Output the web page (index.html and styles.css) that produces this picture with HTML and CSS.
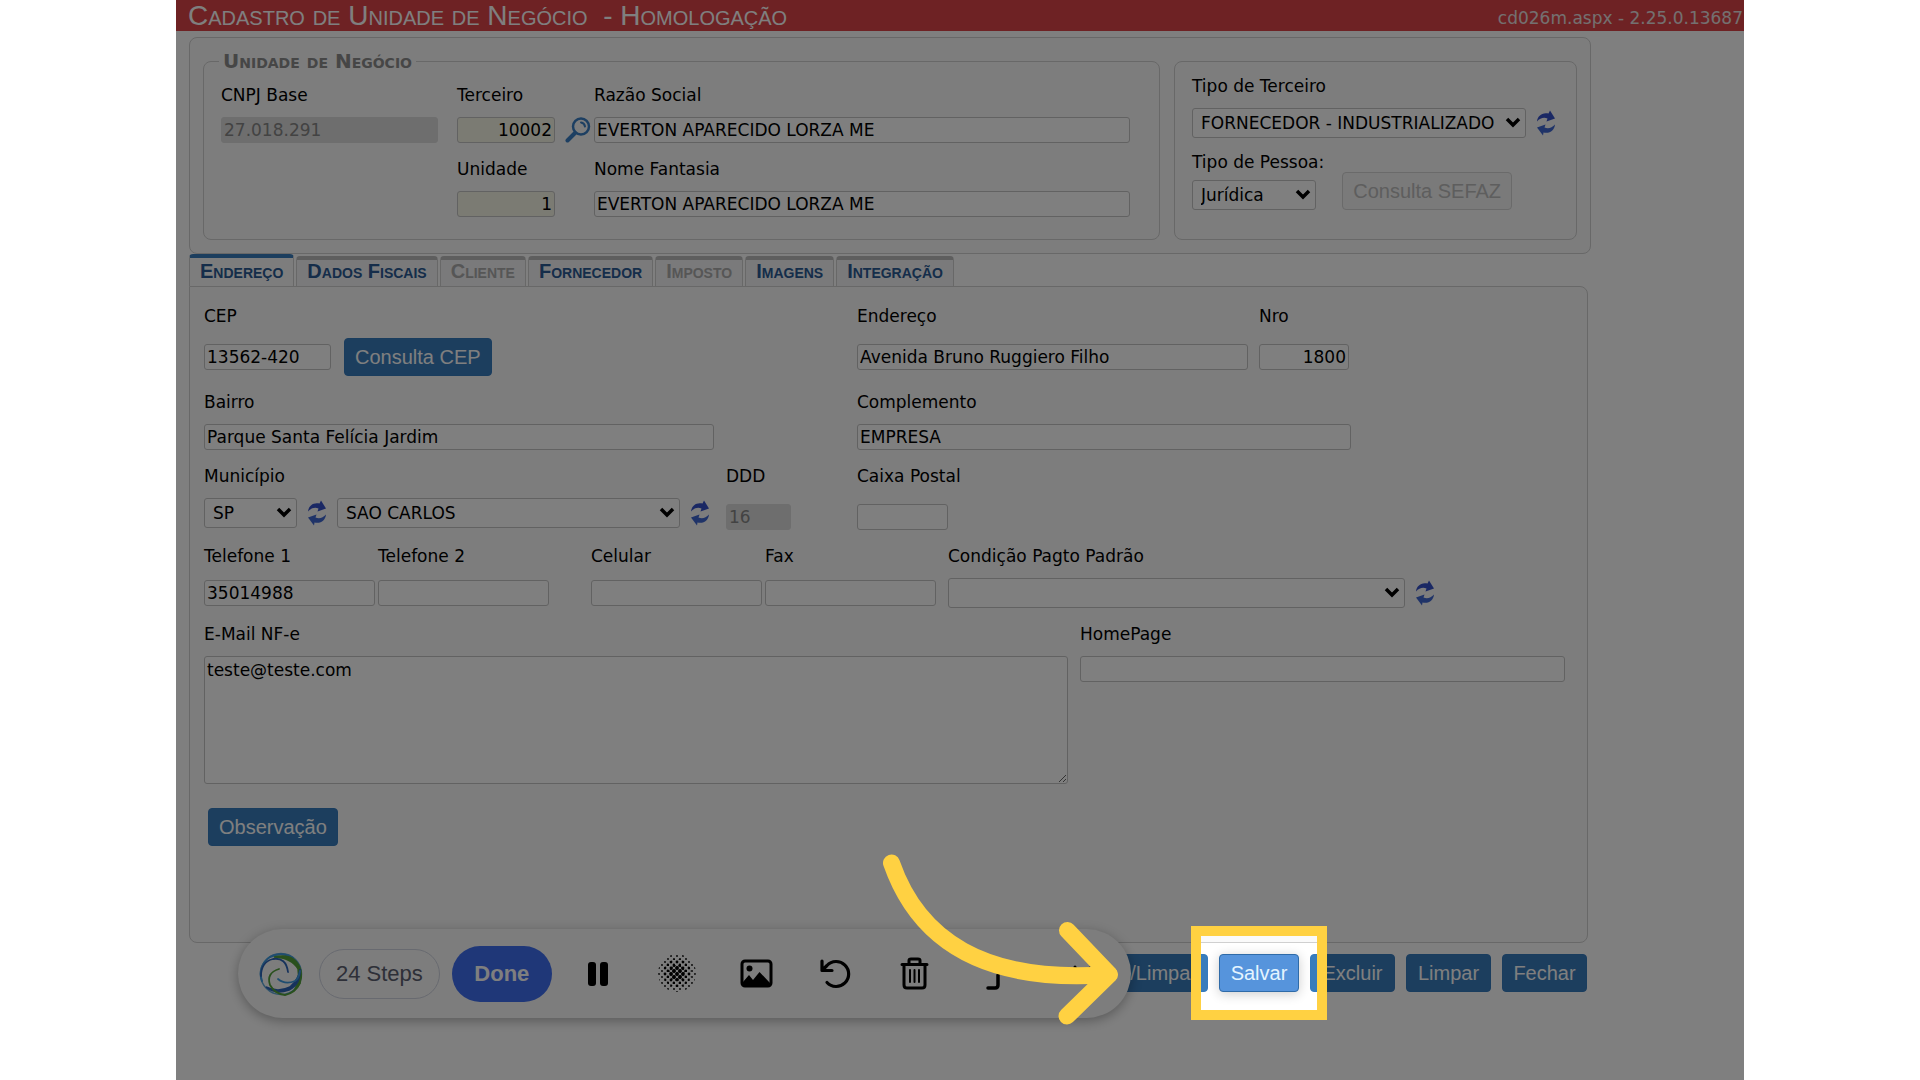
FILE: index.html
```html
<!DOCTYPE html>
<html lang="pt-BR">
<head>
<meta charset="utf-8">
<title>Cadastro de Unidade de Negócio</title>
<link rel="stylesheet" href="styles.css">
</head>
<body>
<svg class="defs" width="0" height="0" aria-hidden="true">
  <symbol id="refresh" viewBox="0 0 20 26">
    <path d="M1 11.500C1.500 6 6 2 12.500 3.500L14 0.500L19 8.500L10.500 11.500L11.500 8.500C8 7 4 8 1 11.500Z" fill="#3450c8"/>
    <path d="M19 14.500C18.500 20 14 24 7.500 22.500L7 25.500L1 17.500L9.500 14.500L8.500 17.500C12 19 16 18 19 14.500Z" fill="#3f66d0"/>
  </symbol>
</svg>
<main class="stage">
  <header class="titlebar">
    <h1 class="title">Cadastro de Unidade de Negócio &nbsp;- Homologação</h1>
    <span class="version">cd026m.aspx - 2.25.0.13687</span>
  </header>

  <section class="summary">
    <fieldset class="unit">
      <legend>Unidade de Negócio</legend>
      <div class="unit-grid">
        <div class="field cnpj"><label for="cnpj">CNPJ Base</label><input id="cnpj" class="off" value="27.018.291" disabled></div>
        <div class="field code"><label for="terceiro">Terceiro</label><input id="terceiro" class="num key" value="10002"></div>
        <button class="icon-btn lens" aria-label="Pesquisar">
          <svg width="26" height="26" viewBox="0 0 26 26" fill="none" stroke="#3a7fc4" stroke-linecap="round"><circle cx="16" cy="9.500" r="8" stroke-width="2.500"/><path d="M10 16L2.500 23.500" stroke-width="4"/><path d="M16 5.500Q19.500 6 20 9.500" stroke-width="2"/></svg>
        </button>
        <div class="field"><label for="razao">Razão Social</label><input id="razao" value="EVERTON APARECIDO LORZA ME"></div>
        <div class="field code col-2"><label for="unidade">Unidade</label><input id="unidade" class="num key" value="1"></div>
        <div class="field col-4"><label for="fantasia">Nome Fantasia</label><input id="fantasia" value="EVERTON APARECIDO LORZA ME"></div>
      </div>
    </fieldset>
    <div class="kind">
      <div class="field">
        <label for="tipo">Tipo de Terceiro</label>
        <div class="controls">
          <select id="tipo" class="grow"><option>FORNECEDOR - INDUSTRIALIZADO</option></select>
          <button class="icon-btn" aria-label="Atualizar tipo"><svg width="20" height="26"><use href="#refresh"/></svg></button>
        </div>
      </div>
      <div class="person">
        <div class="field tight"><label for="pessoa">Tipo de Pessoa:</label><select id="pessoa"><option>Jurídica</option></select></div>
        <button class="btn btn-off" disabled>Consulta SEFAZ</button>
      </div>
    </div>
  </section>

  <nav class="tabs">
    <a href="#endereco" class="tab active">Endereço</a>
    <a href="#fiscais" class="tab">Dados Fiscais</a>
    <a href="#cliente" class="tab muted">Cliente</a>
    <a href="#fornecedor" class="tab">Fornecedor</a>
    <a href="#imposto" class="tab muted">Imposto</a>
    <a href="#imagens" class="tab">Imagens</a>
    <a href="#integracao" class="tab">Integração</a>
  </nav>

  <section class="panel" id="endereco">
    <div class="row row-address">
      <div class="field">
        <label for="cep">CEP</label>
        <div class="controls tall"><input id="cep" class="w-cep" value="13562-420"><button class="btn">Consulta CEP</button></div>
      </div>
      <div class="field"><label for="rua">Endereço</label><div class="controls tall"><input id="rua" value="Avenida Bruno Ruggiero Filho"></div></div>
      <div class="field"><label for="nro">Nro</label><div class="controls tall"><input id="nro" class="num" value="1800"></div></div>
    </div>
    <div class="row row-district">
      <div class="field"><label for="bairro">Bairro</label><input id="bairro" value="Parque Santa Felícia Jardim"></div>
      <div class="field"><label for="compl">Complemento</label><input id="compl" value="EMPRESA"></div>
    </div>
    <div class="row row-city">
      <div class="field">
        <label for="uf">Município</label>
        <div class="controls city">
          <select id="uf" class="w-uf"><option>SP</option></select>
          <button class="icon-btn" aria-label="Atualizar UF"><svg width="20" height="26"><use href="#refresh"/></svg></button>
          <select class="grow" aria-label="Cidade"><option>SAO CARLOS</option></select>
          <button class="icon-btn" aria-label="Atualizar cidade"><svg width="20" height="26"><use href="#refresh"/></svg></button>
        </div>
      </div>
      <div class="field low"><label for="ddd">DDD</label><input id="ddd" class="off" value="16" disabled></div>
      <div class="field low"><label for="caixa">Caixa Postal</label><input id="caixa"></div>
    </div>
    <div class="row row-phone">
      <div class="field"><label for="tel1">Telefone 1</label><div class="controls"><input id="tel1" value="35014988"></div></div>
      <div class="field"><label for="tel2">Telefone 2</label><div class="controls"><input id="tel2"></div></div>
      <div class="field"><label for="cel">Celular</label><div class="controls"><input id="cel"></div></div>
      <div class="field"><label for="fax">Fax</label><div class="controls"><input id="fax"></div></div>
      <div class="field">
        <label for="cond">Condição Pagto Padrão</label>
        <div class="controls">
          <select id="cond" class="grow"><option></option></select>
          <button class="icon-btn" aria-label="Atualizar condição"><svg width="20" height="26"><use href="#refresh"/></svg></button>
        </div>
      </div>
    </div>
    <div class="row row-mail">
      <div class="field"><label for="mail">E-Mail NF-e</label><textarea id="mail">teste@teste.com</textarea></div>
      <div class="field"><label for="home">HomePage</label><input id="home"></div>
    </div>
    <div class="note"><button class="btn">Observação</button></div>
  </section>

  <footer class="actions">
    <button class="btn btn-under">/Limpar</button>
    <div class="target">
      <button class="btn btn-hot">Salvar</button>
      <div class="spotlight"></div>
      <svg class="pointer" width="245" height="180" viewBox="880 850 245 180" fill="none" stroke="#ffd142" stroke-width="17" stroke-linecap="round" stroke-linejoin="round" aria-hidden="true">
        <path d="M893.500 864C920 940 985 985 1111 975.500"/><path d="M1069.500 931.500L1111.500 975.500L1069 1017"/>
      </svg>
    </div>
    <button class="btn">Excluir</button>
    <button class="btn">Limpar</button>
    <button class="btn">Fechar</button>
  </footer>

  <div class="recorder">
    <svg width="46" height="46" viewBox="0 0 46 46" fill="none" stroke-linecap="round" aria-hidden="true">
      <circle cx="23" cy="23" r="20.500" stroke="#5fa8d8" stroke-width="1.500"/>
      <path d="M4 30A20 20 0 0 1 12 6Q24 0 35 7" stroke="#3f9be0" stroke-width="2"/>
      <path d="M16 6Q38 1 43 20Q45 32 36 40Q42 30 40 18Q34 7 16 6Z" stroke="#52a03a" stroke-width="1.500" fill="#52a03a"/>
      <path d="M3 25Q3 11 15 8Q28 6 30 21" stroke="#2d64b8" stroke-width="1.800"/>
      <path d="M42 18Q43 33 31 39Q17 44 8 36Q20 42 32 36Q41 28 42 18Z" stroke="#2d64b8" stroke-width="1.500" fill="#2d64b8"/>
      <path d="M21 18Q8 22 12 34Q17 43 27 44Q37 42 42 32" stroke="#52a03a" stroke-width="1.800"/>
      <path d="M20 28Q27 34 37 30Q41 27 42 20" stroke="#3f9be0" stroke-width="1.800"/>
    </svg>
    <span class="steps">24 Steps</span>
    <button class="done">Done</button>
    <div class="tools">
      <button class="tool" aria-label="Pausar"><svg width="40" height="40" viewBox="0 0 40 40"><rect x="10" y="8" width="8" height="24" rx="3"/><rect x="22" y="8" width="8" height="24" rx="3"/></svg></button>
      <button class="tool" aria-label="Desfocar">
        <svg width="40" height="40" viewBox="0 0 40 40">
          <defs>
            <pattern id="big" width="6" height="6" patternUnits="userSpaceOnUse"><circle cx="2" cy="2" r="1.900"/><circle cx="5" cy="5" r="1.900"/><circle cx="-1" cy="5" r="1.900"/><circle cx="5" cy="-1" r="1.900"/></pattern>
            <pattern id="mid" width="6" height="6" patternUnits="userSpaceOnUse"><circle cx="2" cy="2" r="1.400"/><circle cx="5" cy="5" r="1.400"/></pattern>
            <pattern id="tiny" width="6" height="6" patternUnits="userSpaceOnUse"><circle cx="2" cy="2" r="0.900"/><circle cx="5" cy="5" r="0.900"/></pattern>
          </defs>
          <circle cx="20" cy="19" r="19" fill="url(#tiny)"/><circle cx="20" cy="19" r="14" fill="url(#mid)"/><circle cx="20" cy="19" r="8" fill="url(#big)"/>
        </svg>
      </button>
      <button class="tool" aria-label="Imagem"><svg width="40" height="40" viewBox="0 0 40 40"><rect x="6" y="7" width="29" height="25" rx="3" fill="none" stroke="#000" stroke-width="3"/><circle cx="13.500" cy="14.500" r="3"/><path d="M7 31V28L13 21L17 26L23.500 18L34 29V32H7Z"/></svg></button>
      <button class="tool" aria-label="Desfazer"><svg width="40" height="40" viewBox="0 0 40 40" fill="none" stroke="#000" stroke-width="3.200" stroke-linecap="round" stroke-linejoin="round"><path d="M7 7V16.500H17M8 15.500L12 11.500A12.500 12.500 0 1 1 12 28.500"/></svg></button>
      <button class="tool" aria-label="Excluir gravação"><svg width="40" height="40" viewBox="0 0 40 40" fill="none" stroke="#000" stroke-width="3" stroke-linecap="round" stroke-linejoin="round"><path d="M8 10.500H33M15 10V6.500Q15 5 17 5H24Q26 5 26 6.500V10M10 11V31Q10 34 13 34H28Q31 34 31 31V11"/><path d="M16 16V28M20.500 16V28M25 16V28" stroke-width="2"/></svg></button>
      <button class="tool" aria-label="Recortar"><svg width="40" height="40" viewBox="0 0 40 40" fill="none" stroke="#000" stroke-width="3.500" stroke-linecap="round"><path d="M15 34H22Q25 34 25 31V21"/></svg></button>
      <button class="tool" aria-label="Mover"><svg width="40" height="40" viewBox="0 0 40 40" fill="none" stroke="#000" stroke-width="3" stroke-linecap="round"><path d="M23 13V16M38 14V29"/></svg></button>
    </div>
  </div>
</main>
</body>
</html>
```
FILE: styles.css
```css
* { box-sizing: border-box; }

body {
  margin: 0;
  padding: 0 176px;
  background: #fff;
  font-family: "DejaVu Sans", sans-serif;
  font-size: 17px;
  line-height: 20px;
  color: #000;
}

.defs { position: absolute; }

.stage {
  position: relative;
  min-height: 100vh;
  overflow: hidden;
  background: #fff;
}

.titlebar {
  display: flex;
  justify-content: space-between;
  align-items: center;
  height: 31px;
  padding: 0 1px 0 12px;
  background: #dd4448;
  color: #fff;
}

.title {
  margin: 0;
  font: 400 28px/28px "Liberation Sans", sans-serif;
  font-variant: small-caps;
}

.version { padding-top: 4px; color: #e8e0e0; }

.summary {
  display: grid;
  grid-template-columns: 1fr 403px;
  gap: 14px;
  margin: 6px 153px 0 13px;
  padding: 13px;
  border: 1px solid #d0d0d0;
  border-radius: 8px;
  background: #fafafa;
}

.unit {
  margin: 0;
  min-width: 0;
  padding: 14px 29px 22px 17px;
  border: 1px solid #d0d0d0;
  border-radius: 8px;
}

.unit legend {
  padding: 0 4px;
  margin-left: -2px;
  font-size: 20px;
  font-weight: 700;
  font-variant: small-caps;
  color: #8c8c8c;
}

.unit-grid {
  display: grid;
  grid-template-columns: 236px 108px 29px 1fr;
  row-gap: 16px;
}
.cnpj { padding-right: 19px; }
.code { width: 98px; }
.col-2 { grid-column: 2; }
.col-4 { grid-column: 4; }
.lens { align-self: end; }

.kind {
  display: flex;
  flex-direction: column;
  gap: 14px;
  margin-top: 10px;
  padding: 14px 20px 14px 17px;
  border: 1px solid #d0d0d0;
  border-radius: 8px;
}

.person { display: flex; align-items: flex-end; gap: 18px; }
.person select { width: 124px; }

.field {
  display: flex;
  flex-direction: column;
  gap: 12px;
  min-width: 0;
}
.field.tight { gap: 8px; }
.field.low { justify-content: space-between; }
label { white-space: nowrap; }

input, select, textarea {
  width: 100%;
  height: 26px;
  margin: 0;
  padding: 0 2px;
  border: 1px solid #c4c4c4;
  border-radius: 3px;
  background-color: #fff;
  font: 17px/20px "DejaVu Sans", sans-serif;
  color: #000;
}

select {
  height: 30px;
  padding: 0 20px 0 8px;
  appearance: none;
  background: #fff url("data:image/svg+xml,%3Csvg xmlns='http://www.w3.org/2000/svg' width='16' height='12'%3E%3Cpath d='M2 2l6 6 6-6' fill='none' stroke='%23000' stroke-width='3.500'/%3E%3C/svg%3E") no-repeat right 4px center;
}

textarea { height: 128px; padding: 3px 2px; display: block; }

.num { text-align: right; }
.key { background-color: #f6f6e6; }
.off { border-color: #dcdcdc; background-color: #dcdcdc; color: #868686; }

.controls { display: flex; align-items: center; gap: 10px; height: 30px; }
.controls.tall { height: 38px; gap: 13px; }
.controls .grow { flex: 1; min-width: 0; }
.w-cep { width: 127px; }
.w-uf { width: 93px; }

.icon-btn {
  display: flex;
  flex: none;
  padding: 0;
  border: 0;
  background: none;
}

.btn {
  height: 38px;
  padding: 0 10px;
  border: 1px solid #357abd;
  border-radius: 4px;
  background: #387cbc;
  color: #fff;
  font: 20px/24px "Liberation Sans", sans-serif;
  white-space: nowrap;
}
.btn-off { border-color: #d4d4d4; background: #f4f4f4; color: #bcbcbc; }
.btn-hot {
  border-color: #2f6ba8;
  background: #5694dc;
  color: #e4f4ff;
  box-shadow: 0 2px 12px rgba(0, 0, 0, 0.2);
}

.tabs {
  display: flex;
  align-items: flex-end;
  gap: 2px;
  height: 32px;
  margin-left: 13px;
}

.tab {
  height: 30px;
  padding: 0 10px;
  border: 1px solid #d0d0d0;
  border-top: 4px solid #bcbcbc;
  border-bottom: 0;
  border-radius: 4px 4px 0 0;
  background: #f4f4f6;
  font: 700 20px/22px "Liberation Sans", sans-serif;
  font-variant: small-caps;
  text-decoration: none;
  color: #2a5a94;
}
.tab.active { height: 32px; padding-top: 2px; border-top-color: #387cbc; background: #fafafa; }
.tab.muted { color: #adadad; }

.panel {
  display: flex;
  flex-direction: column;
  gap: 16px;
  min-height: 657px;
  margin: 0 156px 0 13px;
  padding: 19px 22px 18px 14px;
  border: 1px solid #d0d0d0;
  border-radius: 0 8px 8px 8px;
  background: #fafafa;
}

.row { display: grid; }
.row-address { grid-template-columns: 653px 1fr 90px; padding-right: 216px; }
.row-address > :nth-child(2) { padding-right: 11px; }
.row-district { grid-template-columns: 510px 1fr; column-gap: 143px; padding-right: 214px; }
.row-city { grid-template-columns: 506px 116px 90px; column-gap: 16px; }
.row-city .off { width: 65px; }
.row-city > :last-child { margin-left: -1px; }
.city { height: 32px; padding-bottom: 2px; }
.row-phone { grid-template-columns: 174px 213px 174px 183px 1fr; padding-right: 130px; }
.row-phone input { width: 171px; }
.row-mail { grid-template-columns: 864px 1fr; column-gap: 12px; }
.note { padding: 8px 0 0 4px; }

.actions {
  display: flex;
  justify-content: flex-end;
  gap: 11px;
  margin: 11px 157px 0 0;
}
.actions .btn { min-width: 85px; }
.actions .btn-hot { min-width: 80px; }
.actions .btn-under { padding-left: 32px; }

.target { position: relative; }

/* The shadow dims everything outside the highlighted button. */
.spotlight {
  position: absolute;
  inset: -28px;
  z-index: 2;
  border: 10px solid #ffd142;
  box-shadow: 0 0 0 3000px rgba(0, 0, 0, 0.5);
  pointer-events: none;
}

.pointer {
  position: absolute;
  left: -341px;
  top: -105px;
  z-index: 3;
  pointer-events: none;
}

.recorder {
  position: absolute;
  left: 62px;
  top: 929px;
  z-index: 1;
  display: flex;
  align-items: center;
  height: 89px;
  padding: 0 39px 0 20px;
  border-radius: 45px;
  background: #fafafa;
  box-shadow: 0 3px 12px rgba(0, 0, 0, 0.3);
  font: 22px/24px "Liberation Sans", sans-serif;
}

.steps {
  margin: 0 12px 0 15px;
  padding: 12px 16px;
  border: 1px solid #d0d4e0;
  border-radius: 25px;
  color: #5c6070;
}

.done {
  width: 100px;
  height: 56px;
  border: 0;
  border-radius: 28px;
  background: #3e6ef0;
  color: #fff;
  font: 700 22px/24px "Liberation Sans", sans-serif;
}

.tools { display: flex; gap: 39px; margin-left: 26px; }
.tool { display: flex; padding: 0; border: 0; background: none; }
```
